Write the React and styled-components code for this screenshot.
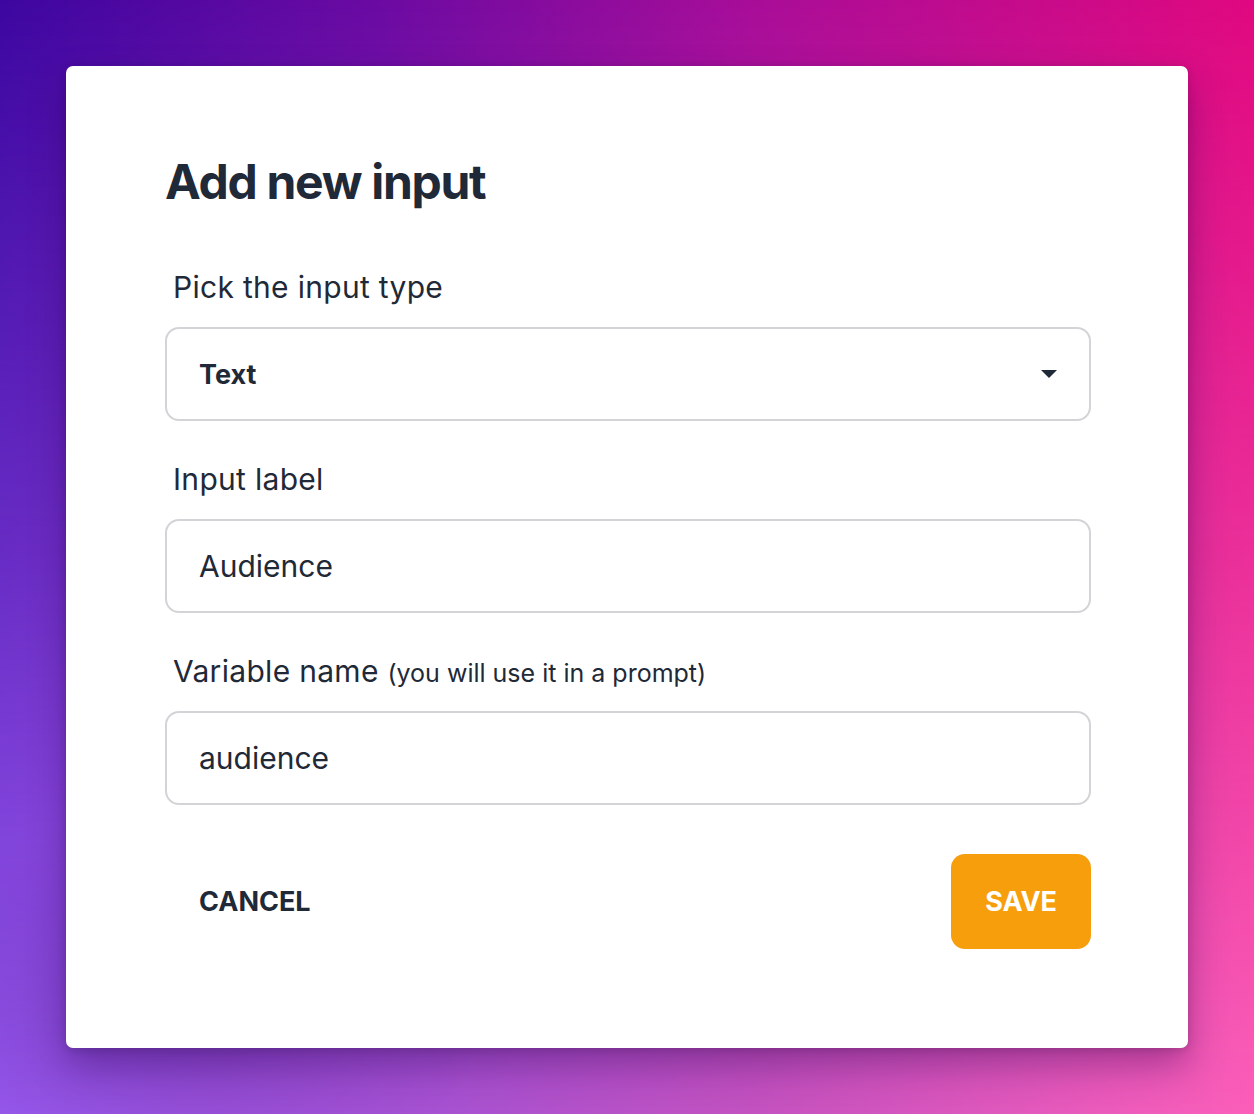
import React, { useState } from 'react';
import styled, { createGlobalStyle } from 'styled-components';

const GlobalStyle = createGlobalStyle`
  * { box-sizing: border-box; }
  html, body { margin: 0; padding: 0; }
  body {
    font-family: Inter, "Noto Sans", "Liberation Sans", sans-serif;
    color: #1f2937;
  }
`;

const App = () => {
  const [type] = useState('Text');
  const [label, setLabel] = useState('Audience');
  const [name, setName] = useState('audience');

  return (
    <Page>
      <GlobalStyle />
      <Card>
        <Title>Add new input</Title>

        <Field first>
          <Label>Pick the input type</Label>
          <Select>
            <span>{type}</span>
            <svg width="16" height="8" viewBox="0 0 16 8">
              <path d="M0 0 L16 0 L8 8 Z" fill="#1f2937" />
            </svg>
          </Select>
        </Field>

        <Field>
          <Label>Input label</Label>
          <Input value={label} onChange={(e) => setLabel(e.target.value)} />
        </Field>

        <Field>
          <Label>
            Variable name <Hint>(you will use it in a prompt)</Hint>
          </Label>
          <Input value={name} onChange={(e) => setName(e.target.value)} />
        </Field>

        <Actions>
          <Button>CANCEL</Button>
          <Button primary>SAVE</Button>
        </Actions>
      </Card>
    </Page>
  );
};

export default App;

const Page = styled.div`
  position: relative;
  min-height: 1114px;
  padding: 66px;
  overflow: hidden;
  background:
    radial-gradient(ellipse 320px 200px at 170px 1010px, rgba(50, 0, 100, 0.22), rgba(50, 0, 100, 0) 100%),
    linear-gradient(to right, #9b5cf2 0%, #a752d2 35%, #c352c0 60%, #fb5fb9 100%);

  &::before {
    content: '';
    position: absolute;
    inset: 0;
    background: linear-gradient(to right, #3d06a0 0%, #6a0aa2 30%, #a80d98 60%, #e0087f 100%);
    -webkit-mask-image: linear-gradient(to bottom, #000 0%, rgba(0, 0, 0, 0.55) 50%, rgba(0, 0, 0, 0) 100%);
    mask-image: linear-gradient(to bottom, #000 0%, rgba(0, 0, 0, 0.55) 50%, rgba(0, 0, 0, 0) 100%);
  }
`;

const Card = styled.div`
  position: relative;
  display: flex;
  flex-direction: column;
  background: #ffffff;
  border-radius: 7px;
  padding: 87px 97px 99px 99px;
  box-shadow: 0 18px 36px rgba(40, 0, 80, 0.35), 0 2px 8px rgba(0, 0, 0, 0.15);
`;

const Title = styled.h1`
  margin: 0;
  font-size: 48px;
  line-height: 58px;
  font-weight: 700;
  letter-spacing: -1.3px;
  color: #1f2937;
`;

const Field = styled.div`
  display: flex;
  flex-direction: column;
  gap: 20px;
  margin-top: ${(p) => (p.first ? '56px' : '38px')};
`;

const Label = styled.label`
  padding-left: 8px;
  font-size: 30px;
  line-height: 40px;
  font-weight: 400;
  letter-spacing: 0.3px;
  color: #1f2937;
`;

const Hint = styled.span`
  font-size: 25px;
  line-height: 1;
  letter-spacing: 0;
`;

const Select = styled.div`
  display: flex;
  align-items: center;
  justify-content: space-between;
  height: 94px;
  padding: 0 32px;
  border: 2px solid #d4d4d8;
  border-radius: 14px;
  font-size: 27px;
  font-weight: 700;
  color: #1f2937;
  cursor: pointer;
`;

const Input = styled.input`
  height: 94px;
  width: 100%;
  padding: 0 32px;
  border: 2px solid #d4d4d8;
  border-radius: 14px;
  font-family: Inter, "Noto Sans", "Liberation Sans", sans-serif;
  font-size: 30px;
  color: #1f2937;
  background: #fff;
  outline: none;
`;

const Actions = styled.div`
  display: flex;
  justify-content: space-between;
  align-items: center;
  margin-top: 49px;
`;

const Button = styled.button`
  height: 95px;
  padding: 0 34px;
  border: none;
  border-radius: 14px;
  background: ${(p) => (p.primary ? '#f79e0d' : 'transparent')};
  color: ${(p) => (p.primary ? '#ffffff' : '#1f2937')};
  font-family: Inter, "Noto Sans", "Liberation Sans", sans-serif;
  font-size: 27px;
  font-weight: 700;
  cursor: pointer;
`;
